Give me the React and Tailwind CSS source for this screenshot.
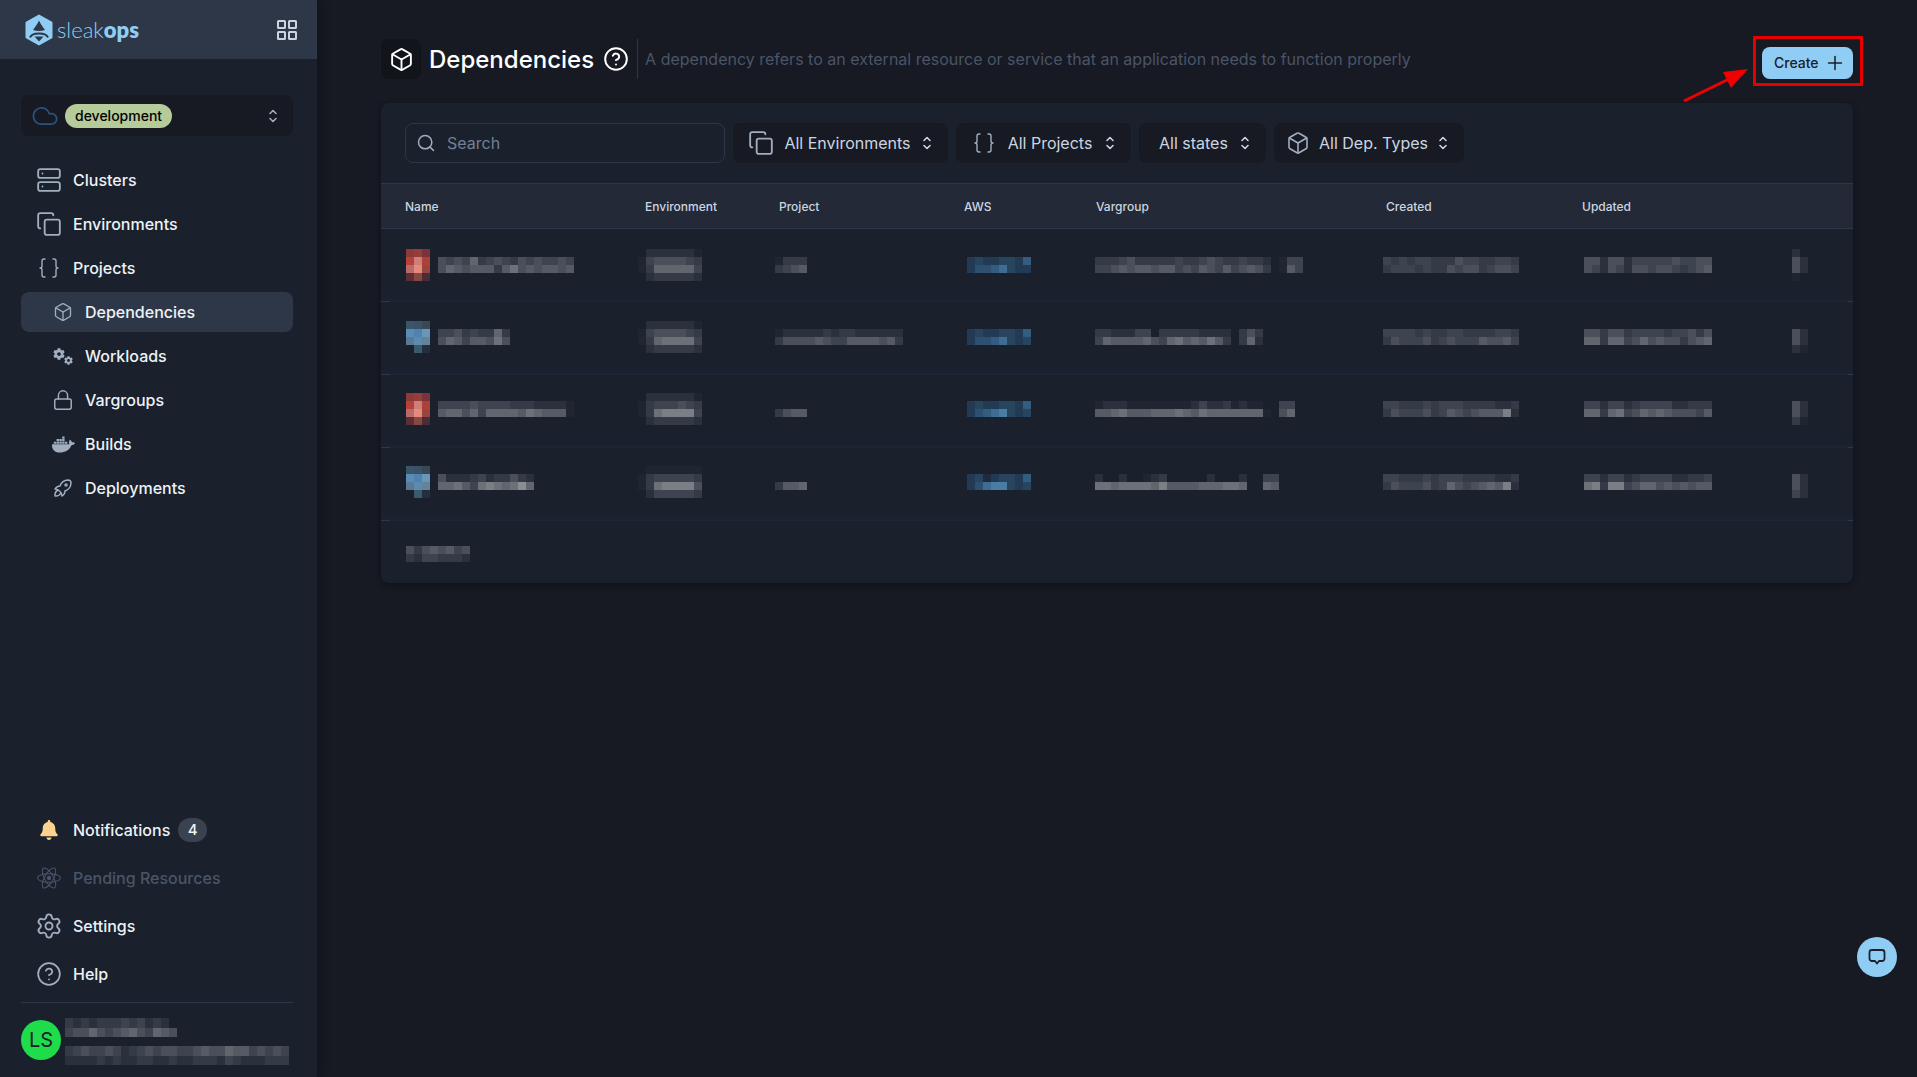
import {
  Server, Copy, Braces, Box, Lock, Settings, CircleHelp, Search, Plus, Cloud,
} from "lucide-react";
import { FaCog, FaDocker, FaReact, FaBell } from "react-icons/fa";
import { TbRocket } from "react-icons/tb";

const GRAY = ["#1f2531", "#2a303c", "#343a46", "#3e444f", "#4a4f5a", "#555a64", "#60656e", "#6c7179", "#7a7e85", "#8a8d93"];
const BLUE = ["#1f2a3a", "#233a55", "#284560", "#2d5070", "#345c80", "#3e6d93", "#4a7ca4"];
const RED = [
  ["#8a3a3a", "#973c3a", "#7a3437"],
  ["#b8403a", "#cc8078", "#b0403a"],
  ["#b86a68", "#e68a80", "#9a4440"],
  ["#5a3036", "#854842", "#4a2c34"],
];
const SKY = [
  ["#3a5468", "#3e5068", "#384858"],
  ["#5a8cb8", "#4e82b0", "#6a96b8"],
  ["#5a7a94", "#5a8cb0", "#64829c"],
  [null, "#3a5a70", "#22303e"],
];

// blurred text blocks: every digit is a shade from the palette, "." is empty
function Mosaic({ rows, palette = GRAY, w = 8, h = 8 }) {
  return (
    <div className="flex flex-col">
      {rows.map((row, i) => (
        <div key={i} className="flex">
          {[...row].map((c, j) => (
            <span key={j} style={{ width: w, height: h, background: c === "." ? "transparent" : palette[+c] }} />
          ))}
        </div>
      ))}
    </div>
  );
}

function Swatch({ cells }) {
  return (
    <div className="flex flex-col">
      {cells.map((row, i) => (
        <div key={i} className="flex">
          {row.map((c, j) => (
            <span key={j} style={{ width: 8, height: 8, background: c || "transparent" }} />
          ))}
        </div>
      ))}
    </div>
  );
}

function UpDown({ className = "" }) {
  return (
    <svg viewBox="0 0 12 18" className={`w-[12px] h-[18px] shrink-0 ${className}`} fill="none" stroke="currentColor" strokeWidth="1.6" strokeLinecap="round" strokeLinejoin="round">
      <path d="M3 6.5 6 3.5l3 3" />
      <path d="M3 11.5l3 3 3-3" />
    </svg>
  );
}

function Logo() {
  return (
    <svg viewBox="0 0 30 32" className="w-[30px] h-[32px] shrink-0">
      <path d="M15 1.5 27.5 8.5v15L15 30.5 2.5 23.5v-15Z" fill="#90cdf4" stroke="#90cdf4" strokeWidth="2" strokeLinejoin="round" />
      <path d="M15 6.5c1.5 3.5 4 6.5 6 9.5-3.5 1.2-8.5 1.2-12 0 2-3 4.5-6 6-9.5Z" fill="#2d3748" />
      <path d="M6 23.5c1.8-5.5 16.2-5.5 18 0" fill="none" stroke="#2d3748" strokeWidth="2" />
      <path d="M10.5 22.5h9L15 27.5Z" fill="#2d3748" />
    </svg>
  );
}

function GridIcon() {
  return (
    <svg viewBox="0 0 22 22" className="w-[22px] h-[22px]" fill="none" stroke="#cbd5e0" strokeWidth="2">
      <rect x="2" y="2" width="7" height="7" rx="0.5" />
      <rect x="13" y="2" width="7" height="7" rx="0.5" />
      <rect x="2" y="13" width="7" height="7" rx="0.5" />
      <rect x="13" y="13" width="7" height="7" rx="0.5" />
    </svg>
  );
}

function GearsIcon() {
  return (
    <span className="flex items-start h-[17px]">
      <FaCog size={12} />
      <FaCog size={9} className="mt-[8px] -ml-[1px]" />
    </span>
  );
}

const topNav = [
  { label: "Clusters", icon: <Server size={26} strokeWidth={1.7} /> },
  { label: "Environments", icon: <Copy size={26} strokeWidth={1.7} /> },
  { label: "Projects", icon: <Braces size={24} strokeWidth={1.4} /> },
];

const subNav = [
  { label: "Dependencies", icon: <Box size={20} strokeWidth={1.6} />, active: true },
  { label: "Workloads", icon: <GearsIcon /> },
  { label: "Vargroups", icon: <Lock size={22} strokeWidth={1.6} /> },
  { label: "Builds", icon: <FaDocker size={23} /> },
  { label: "Deployments", icon: <TbRocket size={24} strokeWidth={1.5} /> },
];

const rowsData = [
  {
    pad: "pt-[20px]",
    avatar: RED,
    name: [".................", "43436234324343343", "46545552574545545"],
    env: [".1111110", "03444432", "02666663", ".1222221"],
    project: ["....", "0222", "2345"],
    aws: ["........", "12112214", "13345211"],
    vargroup: ["......................", "2223422222322343223221.033", "3345455455343543534542.053"],
    created: ["32323322243322332", "23332322434423443"],
    updated: ["4414413333343344", "4314314434432345"],
    more: ["1.", "41", "41", "0."],
  },
  {
    pad: "pt-[19px]",
    avatar: SKY,
    name: [".........", "334232262", "465355474"],
    env: [".1111110", "03444432", "02677773", ".1222221"],
    project: ["....", "0111112122111111", "2444454335555452"],
    aws: ["........", "12112214", "13345212"],
    vargroup: ["......................", "2211133.222221111.242", "36555564367565752.261"],
    created: ["33332322332222332", "24333423433354453"],
    updated: ["4424423333233424", "6626634645442456"],
    more: [".", "41", "41", "10"],
  },
  {
    pad: "pt-[18px]",
    avatar: RED,
    name: [".................", "33334333322211110", "56646366665765550"],
    env: [".1111110", "02333432", "02788883", ".1222221"],
    project: ["....", "....", "2455"],
    aws: ["........", "12112214", "13456212"],
    vargroup: ["......................", "011100000000131120100..33", "5567555666765766666660.46"],
    created: ["33222323332222112", "24333423543455581"],
    updated: ["3313312333311222", "6626734656544435"],
    more: [".", "41", "41", "20"],
  },
  {
    pad: "pt-[18px]",
    avatar: SKY,
    name: ["............", "411123122421", "667537876796"],
    env: [".0000000", "02333332", "02788884", ".1333332"],
    project: ["....", "....", "2556"],
    aws: ["........", "12012214", "13566212"],
    vargroup: ["......................", "1..1..012.....1...1..33", "7767777685555666776..65"],
    created: ["33222323332222112", "24333423643456581"],
    updated: ["3313312333311223", "7828834664545455"],
    more: [".", "41", "41", "31"],
  },
];

function DividerLine() {
  return (
    <div className="flex h-px">
      <div className="w-[9px] bg-[#2d3748]" />
      <div className="flex-1 bg-[#1e2534]" />
      <div className="w-[5px] bg-[#2d3748]" />
    </div>
  );
}

function Filter({ icon, label, className }) {
  return (
    <button className={`h-[40px] rounded-lg bg-[#171923] flex items-center justify-between text-[#cbd5e0] text-base ${className}`}>
      {icon}
      <span>{label}</span>
      <UpDown className="text-[#cbd5e0]" />
    </button>
  );
}

function BottomItem({ icon, children, className = "text-[#edf2f7]" }) {
  return (
    <div className={`h-[48px] pl-[15px] flex items-center gap-[11px] font-medium ${className}`}>
      <span className="w-[26px] flex justify-center [&>svg]:shrink-0">{icon}</span>
      {children}
    </div>
  );
}

export default function App() {
  return (
    <div className="h-screen w-full flex overflow-hidden bg-[#171923] font-[Inter,sans-serif]">
      {/* Sidebar */}
      <aside className="w-[317px] shrink-0 h-full flex flex-col bg-[#1a202c] relative z-10 shadow-[3px_0_10px_rgba(0,0,0,0.25)]">
        <div className="h-[59px] bg-[#2d3748] flex items-center justify-between pl-[24px] pr-[19px]">
          <div className="flex items-center gap-[3px]">
            <Logo />
            <span className="text-[#90cdf4] text-[22px] font-[Lato,sans-serif] font-light leading-none">
              sleak<span className="font-extrabold">ops</span>
            </span>
          </div>
          <GridIcon />
        </div>

        <div className="pl-[21px] pr-[24px]">
          <div className="mt-[36px] h-[41px] rounded-lg bg-[#171923] flex items-center pl-[10px] pr-[14px]">
            <Cloud size={28} className="text-[#2c5282]" strokeWidth={1.5} />
            <span className="ml-[6px] h-[24px] px-[10px] rounded-full bg-[#b5cb99] text-black text-sm font-medium flex items-center">development</span>
            <UpDown className="ml-auto text-[#a0aec0]" />
          </div>

          <nav className="mt-[24px] flex flex-col gap-[4px]">
            {topNav.map((n) => (
              <div key={n.label} className="h-[40px] pl-[15px] flex items-center gap-[11px] text-[#edf2f7] font-medium">
                <span className="w-[26px] flex justify-center text-[#a0aec0]">{n.icon}</span>
                {n.label}
              </div>
            ))}
            {subNav.map((n) => (
              <div
                key={n.label}
                className={`h-[40px] pl-[32px] flex items-center gap-[12px] rounded-lg text-[#edf2f7] font-medium ${n.active ? "bg-[#2d3748]" : ""}`}
              >
                <span className="w-[20px] flex justify-center text-[#a0aec0] [&>svg]:shrink-0">{n.icon}</span>
                {n.label}
              </div>
            ))}
          </nav>
        </div>

        <div className="mt-auto pl-[21px] pr-[24px] pb-[17px]">
          <BottomItem icon={<FaBell size={20} className="text-[#fbd38d]" />}>
            Notifications
            <span className="-ml-[3px] w-[29px] h-[24px] rounded-full bg-[#3a4250] flex items-center justify-center text-[15px]">4</span>
          </BottomItem>
          <BottomItem icon={<FaReact size={24} />} className="text-[#4a5568]">Pending Resources</BottomItem>
          <BottomItem icon={<Settings size={28} strokeWidth={1.6} className="text-[#a0aec0]" />}>Settings</BottomItem>
          <BottomItem icon={<CircleHelp size={26} strokeWidth={1.6} className="text-[#a0aec0]" />}>Help</BottomItem>
          <div className="mt-[4px] h-px bg-[#2d3748]" />
          <div className="mt-[17px] h-[40px] flex gap-[4px]">
            <div className="w-[40px] h-[40px] rounded-full bg-[#1fdd4a] text-[#1a202c] text-xl flex items-center justify-center">LS</div>
            <div className="-mt-[2px] flex flex-col gap-[9px]">
              <Mosaic w={8} h={9.5} rows={["2121222323121.", "34464345643654"]} />
              <Mosaic w={8} h={9.5} rows={["2343343123434433454465534343", "1111212112211211222132111222"]} />
            </div>
          </div>
        </div>
      </aside>

      {/* Main */}
      <main className="flex-1 min-w-0 pl-[64px] pr-[64px] pt-[39px]">
        <div className="flex items-start justify-between">
          <div className="flex items-center h-[40px]">
            <div className="w-[40px] h-[40px] rounded-lg bg-[#12141c] flex items-center justify-center text-white">
              <Box size={25} strokeWidth={1.8} />
            </div>
            <h1 className="ml-[8px] mt-[1px] text-2xl font-medium text-white">Dependencies</h1>
            <CircleHelp size={26} strokeWidth={1.8} className="ml-[9px] text-white" />
            <div className="ml-[8px] w-px h-[40px] bg-[#2d3748]" />
            <p className="ml-[7px] text-base text-[#4a5568]">A dependency refers to an external resource or service that an application needs to function properly</p>
          </div>
          <div className="relative mt-[8px]">
            <button className="h-[32px] w-[91px] rounded-lg bg-[#90cdf4] text-[#1a202c] text-sm font-medium flex items-center pl-[12px] gap-[5px]">
              Create
              <Plus size={22} strokeWidth={1.7} />
            </button>
            {/* annotation over the button */}
            <div className="absolute -left-[9px] -right-[10px] -top-[11px] -bottom-[7px] border-[3px] border-[#e60000]" />
            <svg viewBox="0 0 66 34" className="absolute -left-[79px] top-[21px] w-[66px] h-[34px]">
              <path d="M1 33 46 11" stroke="#f00000" strokeWidth="3" />
              <path d="M65 1 40 4l8 16Z" fill="#f00000" />
            </svg>
          </div>
        </div>

        <section className="mt-[24px] rounded-lg bg-[#1a202c] shadow-[0_2px_6px_rgba(0,0,0,0.3)] overflow-hidden">
          <div className="h-[80px] pl-[24px] flex items-center gap-[8px]">
            <div className="w-[320px] h-[40px] rounded-lg border border-[#2d3748] bg-[#1a202c] flex items-center pl-[10px] gap-[11px] text-[#718096]">
              <Search size={20} className="text-[#a0aec0]" strokeWidth={1.8} />
              <span className="text-base">Search</span>
            </div>
            <Filter
              className="w-[215px] pl-[15px] pr-[15px]"
              icon={<Copy size={26} strokeWidth={1.7} className="text-[#a0aec0]" />}
              label="All Environments"
            />
            <Filter
              className="w-[175px] pl-[16px] pr-[15px]"
              icon={<Braces size={24} strokeWidth={1.4} className="text-[#a0aec0]" />}
              label="All Projects"
            />
            <Filter className="w-[127px] pl-[20px] pr-[15px]" label="All states" />
            <Filter
              className="w-[190px] pl-[12px] pr-[15px]"
              icon={<Box size={24} strokeWidth={1.6} className="text-[#a0aec0]" />}
              label="All Dep. Types"
            />
          </div>

          <div className="h-[46px] pt-[1px] pl-[24px] grid grid-cols-[240px_134px_185px_132px_290px_196px_1fr] items-center bg-[#232936] border-y border-[#2d3748] text-xs font-medium text-[#cbd5e0]">
            <span>Name</span>
            <span>Environment</span>
            <span>Project</span>
            <span>AWS</span>
            <span>Vargroup</span>
            <span>Created</span>
            <span>Updated</span>
          </div>

          {rowsData.map((r, i) => (
            <div key={i}>
              <div className={`h-[72px] pl-[25px] grid grid-cols-[232px_137px_192px_128px_288px_193px_216px_1fr] items-start bg-[linear-gradient(to_bottom,#1a202c_90%,#1b2231_100%)] ${r.pad}`}>
                <div className="flex items-start gap-[8px]">
                  <Swatch cells={r.avatar} />
                  <Mosaic rows={r.name} />
                </div>
                <Mosaic rows={r.env} />
                <Mosaic rows={r.project} />
                <Mosaic rows={r.aws} palette={BLUE} />
                <Mosaic rows={r.vargroup} />
                <div className="pt-[8px]"><Mosaic rows={r.created} /></div>
                <div className="pt-[8px] pl-[8px]"><Mosaic rows={r.updated} /></div>
                <Mosaic rows={r.more} />
              </div>
              <DividerLine />
            </div>
          ))}

          <div className="h-[62px] pt-[4px] pl-[25px] flex items-center">
            <Mosaic rows={["42454534", "21332221"]} />
          </div>
        </section>
      </main>

      {/* chat bubble */}
      <button className="fixed right-[20px] bottom-[100px] z-20 w-[40px] h-[40px] rounded-full bg-[#90cdf4] flex items-center justify-center">
        <svg viewBox="0 0 18 18" className="w-[18px] h-[18px]" fill="none" stroke="#1a202c" strokeWidth="1.8" strokeLinejoin="round">
          <path d="M4 2h10a2.5 2.5 0 0 1 2.5 2.5v6A2.5 2.5 0 0 1 14 13h-3l-2 2.5L7 13H4a2.5 2.5 0 0 1-2.5-2.5v-6A2.5 2.5 0 0 1 4 2Z" />
        </svg>
      </button>
    </div>
  );
}
